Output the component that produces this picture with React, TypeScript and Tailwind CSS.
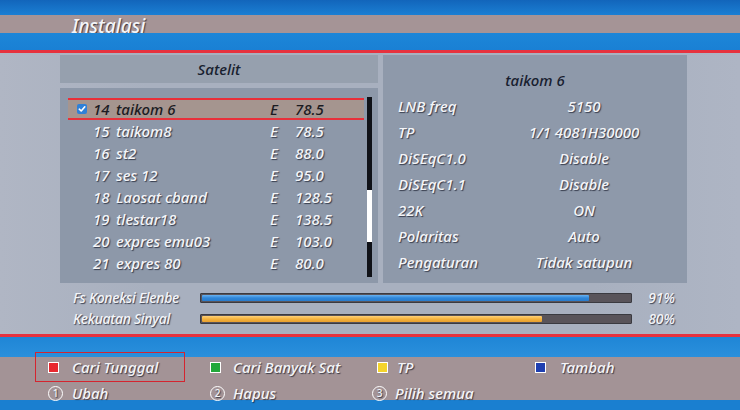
import React from "react";

const sats: [string, string, string, string][] = [
  ["14", "taikom 6", "E", "78.5"],
  ["15", "taikom8", "E", "78.5"],
  ["16", "st2", "E", "88.0"],
  ["17", "ses 12", "E", "95.0"],
  ["18", "Laosat cband", "E", "128.5"],
  ["19", "tlestar18", "E", "138.5"],
  ["20", "expres emu03", "E", "103.0"],
  ["21", "expres 80", "E", "80.0"],
];

const params: [string, string][] = [
  ["LNB freq", "5150"],
  ["TP", "1/1 4081H30000"],
  ["DiSEqC1.0", "Disable"],
  ["DiSEqC1.1", "Disable"],
  ["22K", "ON"],
  ["Polaritas", "Auto"],
  ["Pengaturan", "Tidak satupun"],
];

const bars: { label: string; pct: number; fill: string }[] = [
  { label: "Fs Koneksi Elenbe", pct: 91, fill: "blue" },
  { label: "Kekuatan Sinyal", pct: 80, fill: "orange" },
];

const sh = "[text-shadow:1px_1px_1px_rgba(25,30,45,0.75)]";

function Check() {
  return (
    <span className="w-[10px] h-[10px] rounded-[2px] bg-[#2f80d8] flex items-center justify-center">
      <svg width="8" height="8" viewBox="0 0 8 8">
        <path d="M1.3 4.2 L3.2 6 L6.8 1.8" fill="none" stroke="#fff" strokeWidth="1.6" strokeLinecap="round" strokeLinejoin="round" />
      </svg>
    </span>
  );
}

function Sq({ color }: { color: string }) {
  return <span className={`w-[11px] h-[11px] border-[1.5px] border-white shrink-0 ${color}`} />;
}

function Circ({ n }: { n: string }) {
  return (
    <span className="w-[15px] h-[15px] rounded-full border-[1.5px] border-white flex items-center justify-center text-[10px] leading-none not-italic shrink-0">
      {n}
    </span>
  );
}

export default function App() {
  return (
    <div className={`w-[740px] h-[410px] overflow-hidden flex flex-col italic font-medium font-['Noto_Sans',sans-serif] text-[#f4f5f8] bg-[#aab2c0] ${sh}`}>
      <div className="h-[15px] bg-[linear-gradient(#1265bb,#1b7fd3)]" />
      <div className="h-[18px] bg-[#a59496] pl-[72px] pt-[2px]">
        <span className="block text-[19px] leading-[18px]">Instalasi</span>
      </div>
      <div className="h-[17px] bg-[linear-gradient(#1c86d8,#1a80d4)]" />
      <div className="h-[3px] bg-[#e6323e]" />

      <div className="h-[281px] flex flex-col bg-[linear-gradient(90deg,#b0b6c4,#a8b0bf_20%,#a8b0bf_80%,#aeb5c4)]">
        <div className="flex pt-[2px] pl-[60px] gap-[5px]">
          <div className="w-[318px] flex flex-col gap-[5px]">
            <div className="h-[28px] bg-[#96a0ae] flex items-center justify-center text-[15px] text-[#18202f] [text-shadow:none]">
              Satelit
            </div>
            <div className="h-[195px] bg-[#8d98a9] relative pt-[10px] pl-[8px]">
              {sats.map((s, i) => {
                const sel = i === 0;
                return (
                  <div
                    key={s[0]}
                    className={`h-[22px] w-[296px] flex items-center text-[15px] ${
                      sel
                        ? "bg-[#a5958f] border-y-2 border-[#e8303a] text-[#1b1b22] [text-shadow:none]"
                        : ""
                    }`}
                  >
                    <span className="w-[25px] pl-[9px] flex">{sel ? <Check /> : null}</span>
                    <span className="w-[23px]">{s[0]}</span>
                    <span className="w-[154px]">{s[1]}</span>
                    <span className="w-[25px]">{s[2]}</span>
                    <span>{s[3]}</span>
                  </div>
                );
              })}
              <div className="absolute left-[307px] top-[9px] w-[5px] h-[180px] bg-[#101218]">
                <div className="absolute left-0 top-[93px] w-[5px] h-[52px] bg-white" />
              </div>
            </div>
          </div>
          <div className="w-[304px] h-[228px] bg-[#8e99aa] pt-[12px]">
            <div className="h-[26px] flex items-center justify-center text-[15px] text-[#18202f] [text-shadow:none]">
              taikom 6
            </div>
            {params.map((p) => (
              <div key={p[0]} className="h-[26px] flex items-center text-[15px]">
                <span className="w-[135px] pl-[15px]">{p[0]}</span>
                <span className="w-[132px] text-center">{p[1]}</span>
              </div>
            ))}
          </div>
        </div>
        <div className="flex flex-col mt-[4px]">
          {bars.map((b) => (
            <div key={b.label} className="h-[21px] flex items-center">
              <span className="w-[200px] pl-[73px] text-[14px] tracking-[-0.3px]">{b.label}</span>
              <div className="w-[432px] h-[10px] bg-[#59545a] border border-[#3a3a40] rounded-[1px] p-[1px]">
                <div
                  className={`h-full rounded-[1px] ${
                    b.fill === "blue"
                      ? "bg-[linear-gradient(#6ab2f0,#2f86d8_50%,#2a7ccc)]"
                      : "bg-[linear-gradient(#ffd27a,#f3b23e_50%,#e8a030)]"
                  }`}
                  style={{ width: `${b.pct - 0.5}%` }}
                />
              </div>
              <span className="w-[43px] text-right text-[14px]">{b.pct}%</span>
            </div>
          ))}
        </div>
      </div>

      <div className="h-[3px] bg-[#e6323e]" />
      <div className="h-[73px] bg-[linear-gradient(#1f86d6_0px,#2a90dc_20px,#a39396_20px,#a39396_63px,#1a7fd0_63px)] pt-[15px] text-[15px]">
        <div className="grid grid-cols-[175px_162px_158px_200px] pl-[35px] h-[30px] items-center">
          <div className="w-[150px] h-[30px] border border-[#d4252f] flex items-center pl-[12px]">
            <Sq color="bg-[#e8282f]" />
            <span className="ml-[13px]">Cari Tunggal</span>
          </div>
          <div className="flex items-center">
            <Sq color="bg-[#22a83a]" />
            <span className="ml-[12px]">Cari Banyak Sat</span>
          </div>
          <div className="flex items-center pl-[5px]">
            <Sq color="bg-[#f5d42c]" />
            <span className="ml-[9px]">TP</span>
          </div>
          <div className="flex items-center pl-[5px]">
            <Sq color="bg-[#1f3fb0]" />
            <span className="ml-[14px]">Tambah</span>
          </div>
        </div>
        <div className="grid grid-cols-[175px_162px_158px_200px] pl-[35px] h-[22px] items-center">
          <div className="flex items-center pl-[13px]">
            <Circ n="1" />
            <span className="ml-[9px]">Ubah</span>
          </div>
          <div className="flex items-center">
            <Circ n="2" />
            <span className="ml-[8px]">Hapus</span>
          </div>
          <div className="flex items-center">
            <Circ n="3" />
            <span className="ml-[8px]">Pilih semua</span>
          </div>
          <div />
        </div>
      </div>
    </div>
  );
}
